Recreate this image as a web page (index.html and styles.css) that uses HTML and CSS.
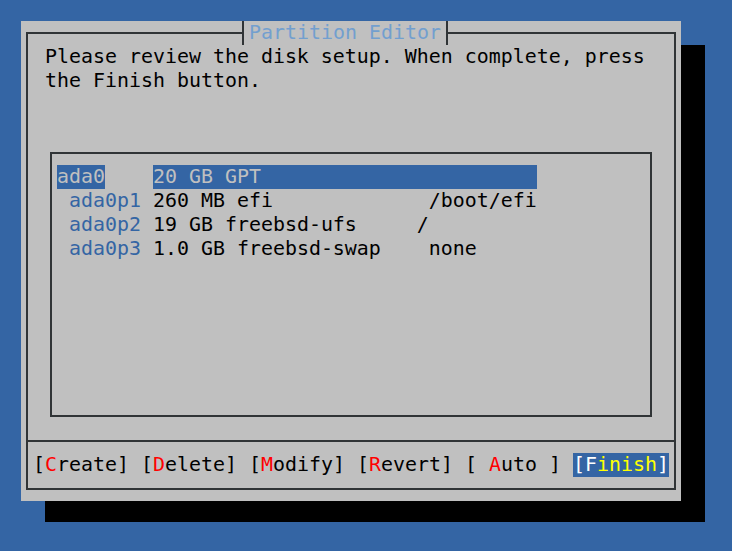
FILE: index.html
```html
<!DOCTYPE html>
<html>
<head>
<meta charset="utf-8">
<title>Partition Editor</title>
<link rel="stylesheet" href="styles.css">
</head>
<body>
<div class="dialog">
  <div class="title">Partition Editor</div>
  <div class="frame">
    <div class="message">Please review the disk setup. When complete, press
the Finish button.</div>
    <div class="list"><div class="row"><span class="sel">ada0</span>    <span class="sel">20 GB GPT                       </span></div><div class="row"> <span class="dev">ada0p1</span> 260 MB efi             /boot/efi</div><div class="row"> <span class="dev">ada0p2</span> 19 GB freebsd-ufs     /</div><div class="row"> <span class="dev">ada0p3</span> 1.0 GB freebsd-swap    none</div></div>
    <div class="sep"></div>
    <div class="buttons"><span class="btn">[<span class="hk">C</span>reate]</span> <span class="btn">[<span class="hk">D</span>elete]</span> <span class="btn">[<span class="hk">M</span>odify]</span> <span class="btn">[<span class="hk">R</span>evert]</span> <span class="btn">[ <span class="hk">A</span>uto ]</span> <span class="btn active">[F<span class="hk-active">inish</span>]</span></div>
  </div>
</div>
</body>
</html>
```

FILE: styles.css
```css
html, body {
  margin: 0;
  background: #3465a4;
}

body {
  padding: 21px;
  font-family: "DejaVu Sans Mono", monospace;
  font-size: 19.93px;
  line-height: 24px;
  color: #000;
}

.dialog {
  position: relative;
  width: 660px;
  height: 480px;
  box-sizing: border-box;
  padding: 11px 5px;
  background: #c0c0c0;
  box-shadow: 24px 24px 0 #000;
}

.title {
  position: absolute;
  top: 0;
  left: 221px;
  height: 24px;
  padding: 0 5px;
  border-left: 2px solid #303436;
  border-right: 2px solid #303436;
  background: #c0c0c0;
  color: #729fcf;
  white-space: pre;
}

.frame {
  height: 100%;
  box-sizing: border-box;
  border: 2px solid #303436;
  display: flex;
  flex-direction: column;
}

.message {
  margin: 11px 0 0 17px;
  white-space: pre;
}

.list {
  margin: 59px 22px 0;
  height: 265px;
  box-sizing: border-box;
  border: 2px solid #303436;
  padding: 11px 5px;
  white-space: pre;
}

.row {
  height: 24px;
}

.sel {
  display: inline-block;
  height: 24px;
  vertical-align: top;
  background: #3465a4;
  color: #c0c0c0;
}

.dev {
  color: #3465a4;
}

.sep {
  margin-top: 23px;
  height: 2px;
  background: #303436;
}

.buttons {
  margin-top: 11px;
  height: 24px;
  text-align: center;
  white-space: pre;
}

.hk {
  color: #ff0000;
}

.btn.active {
  display: inline-block;
  height: 24px;
  vertical-align: top;
  background: #3465a4;
  color: #ffffff;
}

.hk-active {
  color: #ffff00;
}
```
